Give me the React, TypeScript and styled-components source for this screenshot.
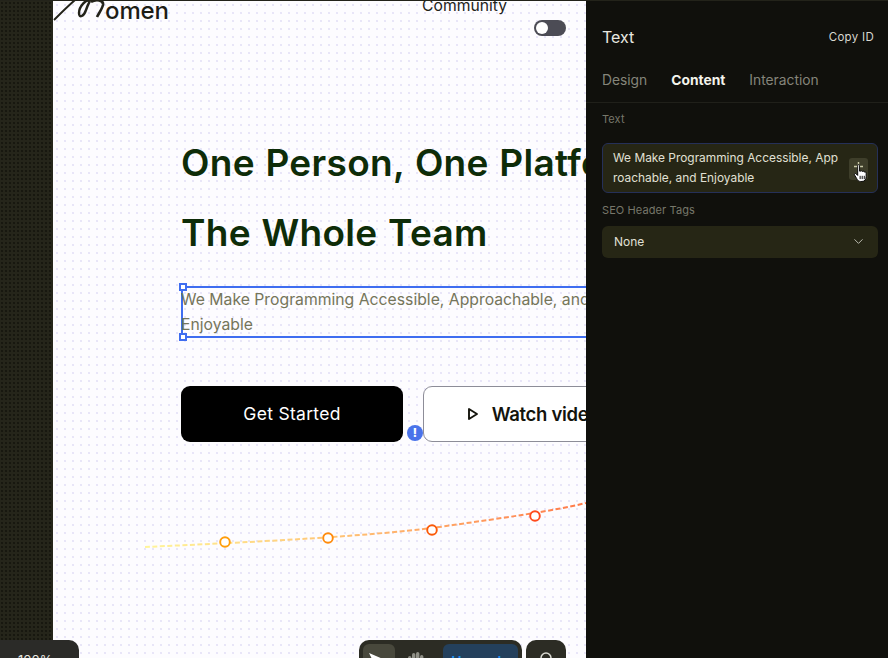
import React from "react";
import styled, { createGlobalStyle } from "styled-components";
import { ChevronDown } from "lucide-react";

const GlobalStyle = createGlobalStyle`
  html, body {
    margin: 0;
    padding: 0;
    background: #10100c;
    font-family: "Inter", "Liberation Sans", sans-serif;
  }
  * {
    box-sizing: border-box;
  }
`;

const points = [
  { x: 172, y: 29, color: "#ff9d0a" },
  { x: 275, y: 25, color: "#ff8a0c" },
  { x: 379, y: 17, color: "#fb5a08" },
  { x: 482, y: 3, color: "#ff4a1c" }
];

export default function App() {
  return (
    <>
      <GlobalStyle />
      <Page>
        <Rail />
        <Canvas>
          <Nav>
            <Logo>
              <LogoMark width="46" height="24" viewBox="0 0 46 24">
                <path d="M0 19 C7 12 14 5 21 -1" stroke="#23231a" strokeWidth="2" fill="none" />
                <path
                  d="M37 0 C32 -3 25 6 25 12 C25 18 30 15 32 9 C33 6 34 3 36 0"
                  stroke="#23231a"
                  strokeWidth="2.4"
                  fill="none"
                />
                <path d="M37 1 C42 -2 50 -1 49 4 C48 8 45 12 43 16" stroke="#23231a" strokeWidth="2.6" fill="none" />
              </LogoMark>
              <LogoText>omen</LogoText>
            </Logo>
            <NavRight>
              <NavLink>Community</NavLink>
              <Toggle>
                <Knob />
              </Toggle>
            </NavRight>
          </Nav>
          <Hero>
            <Title>One Person, One Platform</Title>
            <Title>The Whole Team</Title>
            <Selection>
              <Handle $corner="top" />
              <Handle $corner="bottom" />
              <Subtitle>
                We Make Programming Accessible, Approachable, and
                <br />
                Enjoyable
              </Subtitle>
            </Selection>
            <Actions>
              <PrimaryButton>Get Started</PrimaryButton>
              <WarnBadge>!</WarnBadge>
              <VideoButton>
                <svg width="14" height="14" viewBox="0 0 14 14" fill="none">
                  <path
                    d="M3 2 L3 12 L11 7 Z"
                    stroke="#14140c"
                    strokeWidth="1.9"
                    strokeLinejoin="round"
                  />
                </svg>
                Watch video
              </VideoButton>
            </Actions>
          </Hero>
          <Chart width="533" height="60" viewBox="0 0 533 60">
            <defs>
              <linearGradient id="trend" x1="92" x2="533" y1="0" y2="0" gradientUnits="userSpaceOnUse">
                <stop offset="0" stopColor="#fff59a" />
                <stop offset="0.4" stopColor="#ffc878" />
                <stop offset="1" stopColor="#ff7a4a" />
              </linearGradient>
            </defs>
            <path
              d="M92 34 C200 29 330 23 400 12 C450 5 500 -2 533 -10"
              stroke="url(#trend)"
              strokeWidth="2"
              strokeDasharray="5 2.5"
              fill="none"
            />
            {points.map((p) => (
              <circle key={p.x} cx={p.x} cy={p.y} r="4.8" fill="#fff" stroke={p.color} strokeWidth="1.9" />
            ))}
          </Chart>
        </Canvas>
        <Panel>
          <PanelHeader>
            <PanelTitle>Text</PanelTitle>
            <CopyId>Copy ID</CopyId>
          </PanelHeader>
          <Tabs>
            <Tab>Design</Tab>
            <Tab $active>Content</Tab>
            <Tab>Interaction</Tab>
          </Tabs>
          <PanelBody>
            <FieldLabel>Text</FieldLabel>
            <TextField>
              We Make Programming Accessible, App
              <br />
              roachable, and Enjoyable
              <FieldAction>
                <PlusMark width="19" height="22" viewBox="0 0 19 22">
                  <path d="M9.5 4 V13 M5 8.5 H14" stroke="#c9c9a8" strokeWidth="1.4" />
                </PlusMark>
                <HandCursor width="15" height="20" viewBox="0 0 16 20">
                  <path
                    d="M5 2 C5 .8 7 .8 7 2 V8 L8 8 C9 7.4 9.6 7.6 10 8.4 C11 7.8 11.8 8 12 9 C13.2 8.6 14 9.2 14 10.4 V14 C14 17 12.4 19 9.6 19 H8 C6 19 5 18 4 16 L1.6 12 C1 10.8 2.4 10 3.4 11 L5 12.6 Z"
                    fill="#fff"
                    stroke="#000"
                    strokeWidth="1"
                  />
                  <path d="M7.6 13 V16.5 M9.8 13 V16.5 M12 13 V16.5" stroke="#000" strokeWidth="1" />
                </HandCursor>
              </FieldAction>
            </TextField>
            <FieldLabel $spaced>SEO Header Tags</FieldLabel>
            <SelectField>
              None
              <ChevronDown size={15} strokeWidth={1.6} color="#b9b9ad" />
            </SelectField>
          </PanelBody>
        </Panel>
        <ZoomPill>100%</ZoomPill>
        <Toolbar>
          <ToolActive>
            <svg width="24" height="20" viewBox="0 0 24 20">
              <path d="M2 2 L23 11 L13 14 L11 20 Z" fill="#fff" />
            </svg>
          </ToolActive>
          <ToolIcon>
            <svg width="18" height="18" viewBox="0 0 18 18" fill="#8f8f86">
              <rect x="1" y="5" width="3.4" height="13" rx="1.7" />
              <rect x="5" y="2" width="3.4" height="16" rx="1.7" />
              <rect x="9" y="1" width="3.4" height="17" rx="1.7" />
              <rect x="13" y="4" width="3.4" height="14" rx="1.7" />
            </svg>
          </ToolIcon>
          <UpgradeButton>Upgrade</UpgradeButton>
        </Toolbar>
        <SearchButton>
          <svg width="16" height="16" viewBox="0 0 16 16" fill="none">
            <circle cx="8" cy="8" r="5" stroke="#d8d8d0" strokeWidth="1.5" />
          </svg>
        </SearchButton>
      </Page>
    </>
  );
}

const Page = styled.div`
  position: relative;
  display: flex;
  width: 888px;
  height: 658px;
  overflow: hidden;
  border-top: 1px solid #23231a;
`;

const Rail = styled.div`
  flex: 0 0 53px;
  background-color: #25251a;
  background-image: radial-gradient(#17170f 0.7px, transparent 1px);
  background-size: 4px 4px;
`;

const Canvas = styled.main`
  flex: 0 0 533px;
  overflow: hidden;
  background-color: #fdfcff;
  background-image: radial-gradient(#e2def6 0.6px, transparent 1px);
  background-size: 8px 8px;
`;

const Nav = styled.header`
  display: flex;
  justify-content: space-between;
  height: 139px;
  padding-right: 20px;
`;

const Logo = styled.div`
  display: flex;
  align-items: flex-start;
  height: 24px;
`;

const LogoMark = styled.svg`
  display: block;
  margin-left: 1px;
  margin-right: 5px;
  overflow: visible;
`;

const LogoText = styled.span`
  font-size: 24px;
  line-height: 20px;
  font-weight: 500;
  letter-spacing: -0.1px;
  color: #1d1d16;
`;

const NavRight = styled.div`
  display: flex;
  flex-direction: column;
  align-items: flex-end;
  margin-top: -5px;
  gap: 5px;
`;

const NavLink = styled.span`
  margin-right: 59px;
  font-size: 15.7px;
  line-height: 19px;
  color: #23231a;
`;

const Toggle = styled.div`
  display: flex;
  align-items: center;
  width: 32px;
  height: 16px;
  padding-left: 2px;
  border-radius: 8px;
  background: #4c4c55;
`;

const Knob = styled.div`
  width: 12px;
  height: 12px;
  border-radius: 50%;
  background: #fff;
`;

const Hero = styled.section`
  padding-left: 128px;
`;

const Title = styled.h1`
  margin: 0;
  height: 70px;
  font-size: 37px;
  line-height: 45px;
  font-weight: 600;
  letter-spacing: 0.3px;
  word-spacing: 1px;
  color: #0e2c08;
  white-space: nowrap;
`;

const Selection = styled.div`
  position: relative;
  width: 480px;
  height: 52px;
  margin-top: 6px;
  border: 2px solid #3f6df0;
  border-right: none;
`;

const Handle = styled.span<{ $corner: "top" | "bottom" }>`
  position: absolute;
  left: -4px;
  ${(p) => (p.$corner === "top" ? "top: -5px;" : "bottom: -5px;")}
  width: 8px;
  height: 8px;
  background: #fff;
  border: 2px solid #3f6df0;
`;

const Subtitle = styled.p`
  margin: -1px 0 0 -2px;
  font-size: 15.75px;
  line-height: 25px;
  color: #75755a;
  white-space: nowrap;
`;

const Actions = styled.div`
  position: relative;
  display: flex;
  gap: 20px;
  margin-top: 48px;
  white-space: nowrap;
`;

const PrimaryButton = styled.button`
  flex: 0 0 222px;
  height: 56px;
  padding-bottom: 2px;
  border: none;
  border-radius: 9px;
  background: #000;
  color: #fff;
  font-family: inherit;
  font-size: 17.5px;
  font-weight: 400;
  letter-spacing: 0.3px;
`;

const VideoButton = styled.button`
  display: flex;
  flex: 0 0 222px;
  align-items: center;
  justify-content: center;
  gap: 12px;
  height: 56px;
  padding: 0 3px 0 0;
  border: 1px solid #8d8d98;
  border-radius: 9px;
  background: #fff;
  color: #14140c;
  font-family: inherit;
  font-size: 18.5px;
  font-weight: 600;
  letter-spacing: -0.3px;
`;

const WarnBadge = styled.span`
  position: absolute;
  left: 226px;
  top: 39px;
  width: 16px;
  height: 16px;
  border-radius: 50%;
  background: #4a73ea;
  color: #fff;
  font-size: 12px;
  font-weight: 800;
  line-height: 16px;
  text-align: center;
`;

const Chart = styled.svg`
  display: block;
  margin-top: 71px;
  overflow: visible;
`;

const Panel = styled.aside`
  flex: 1;
  background-color: #10100c;
  color: #e8e8e0;
`;

const PanelHeader = styled.div`
  display: flex;
  align-items: center;
  justify-content: space-between;
  height: 72px;
  padding: 0 14px 0 16px;
`;

const PanelTitle = styled.span`
  font-size: 16px;
  font-weight: 400;
  color: #e8e8e0;
`;

const CopyId = styled.span`
  font-size: 11.5px;
  letter-spacing: 0.3px;
  color: #d8d8d0;
`;

const Tabs = styled.nav`
  display: flex;
  gap: 24px;
  height: 30px;
  padding: 0 16px;
  border-bottom: 1px solid #20201a;
`;

const Tab = styled.span<{ $active?: boolean }>`
  font-size: 13.8px;
  line-height: 15px;
  font-weight: ${(p) => (p.$active ? 700 : 400)};
  color: ${(p) => (p.$active ? "#f4f4ec" : "#85857a")};
`;

const PanelBody = styled.div`
  display: flex;
  flex-direction: column;
  padding: 10px 10px 0 16px;
`;

const FieldLabel = styled.label<{ $spaced?: boolean }>`
  height: ${(p) => (p.$spaced ? "22px" : "30px")};
  margin-top: ${(p) => (p.$spaced ? "11px" : "0")};
  font-size: 11px;
  line-height: 13px;
  letter-spacing: 0.1px;
  color: #77776a;
`;

const TextField = styled.div`
  position: relative;
  height: 50px;
  padding: 4px 10px;
  border: 1px solid #253058;
  border-radius: 6px;
  background: #262615;
  font-size: 11.9px;
  line-height: 20px;
  color: #e0e0d4;
  white-space: nowrap;
`;

const FieldAction = styled.span`
  position: absolute;
  right: 9px;
  top: 14px;
  width: 19px;
  height: 22px;
  border-radius: 3px;
  background: #3e3e2a;
`;

const PlusMark = styled.svg`
  display: block;
`;

const HandCursor = styled.svg`
  position: absolute;
  left: 4px;
  top: 5px;
`;

const SelectField = styled.div`
  display: flex;
  align-items: center;
  justify-content: space-between;
  height: 32px;
  padding: 0 12px 1px;
  border-radius: 6px;
  background: #262615;
  font-size: 12px;
  color: #e0e0d6;
`;

const ZoomPill = styled.div`
  position: absolute;
  left: 0;
  top: 639px;
  width: 79px;
  height: 40px;
  padding: 12px 0 0 18px;
  border-radius: 0 10px 0 0;
  background: #2b2b28;
  color: #e8e8e0;
  font-size: 13px;
`;

const Toolbar = styled.div`
  position: absolute;
  left: 359px;
  top: 639px;
  display: flex;
  gap: 12px;
  width: 163px;
  height: 40px;
  padding: 4px;
  border-radius: 10px;
  background: #2c2c24;
`;

const ToolActive = styled.div`
  display: flex;
  justify-content: center;
  width: 32px;
  height: 32px;
  padding-top: 7px;
  border-radius: 6px;
  background: #48483c;
`;

const ToolIcon = styled.div`
  width: 22px;
  padding-top: 7px;
`;

const UpgradeButton = styled.div`
  flex: 1;
  margin-left: 2px;
  padding-top: 9px;
  border-radius: 6px;
  background: #24405c;
  color: #1d8fef;
  font-size: 14px;
  font-weight: 600;
  text-align: center;
`;

const SearchButton = styled.div`
  position: absolute;
  left: 526px;
  top: 639px;
  width: 40px;
  height: 40px;
  padding-top: 10px;
  border-radius: 10px;
  background: #2c2c24;
  text-align: center;
`;
